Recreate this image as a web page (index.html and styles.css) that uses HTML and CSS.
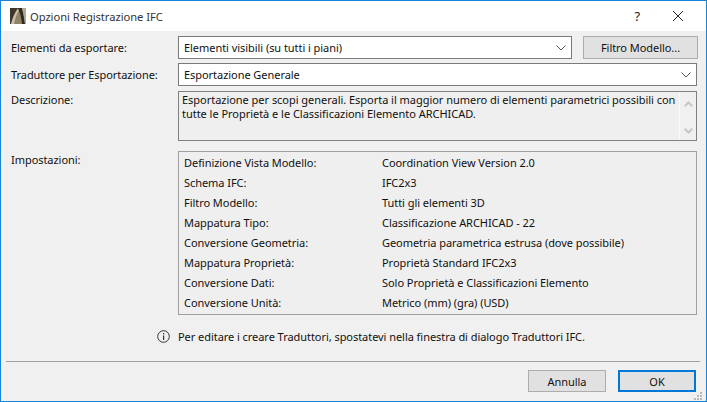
FILE: index.html
```html
<!DOCTYPE html>
<html lang="it">
<head>
  <meta charset="UTF-8">
  <meta name="viewport" content="width=device-width, initial-scale=1.0">
  <title>Opzioni Registrazione IFC</title>
  <link rel="stylesheet" href="styles.css">
</head>
<body>
  <div class="dialog">
    <div class="titlebar">
      <svg class="app-icon" width="16" height="16" viewBox="0 0 16 16">
        <rect width="16" height="16" fill="#8f8468"/>
        <path d="M0 0 H8 Q4 5 1 16 H0 Z" fill="#3f362a"/>
        <path d="M1 16 Q4 5 8 1 L10 1 Q6 6 4 16 Z" fill="#c9bfa6"/>
        <path d="M8 0 H12 Q14 8 15 16 H12 Q11 7 9 3 Z" fill="#2f2a22"/>
        <path d="M12 0 H16 V16 H15 Q14 8 12 0 Z" fill="#b3aa94"/>
      </svg>
      <span class="title">Opzioni Registrazione IFC</span>
      <span class="help">?</span>
      <svg class="close" width="12" height="12" viewBox="0 0 12 12">
        <path d="M1 1 L11 11 M11 1 L1 11" stroke="#222" stroke-width="1" fill="none"/>
      </svg>
    </div>

    <div class="content">
      <div class="row row-one">
        <label>Elementi da esportare:</label>
        <div class="select">
          <span>Elementi visibili (su tutti i piani)</span>
          <svg class="chevron" width="10" height="6" viewBox="0 0 10 6"><path d="M0.5 0.5 L5 5 L9.5 0.5" fill="none" stroke="#555"/></svg>
        </div>
        <button class="btn-filter">Filtro Modello...</button>
      </div>

      <div class="row row-two">
        <label>Traduttore per Esportazione:</label>
        <div class="select">
          <span>Esportazione Generale</span>
          <svg class="chevron" width="10" height="6" viewBox="0 0 10 6"><path d="M0.5 0.5 L5 5 L9.5 0.5" fill="none" stroke="#555"/></svg>
        </div>
      </div>

      <div class="row row-desc">
        <label>Descrizione:</label>
        <div class="desc">
          <p>Esportazione per scopi generali. Esporta il maggior numero di elementi parametrici possibili con tutte le Proprietà e le Classificazioni Elemento ARCHICAD.</p>
          <div class="scrollbar">
            <svg width="9" height="6" viewBox="0 0 9 6"><path d="M0.7 5.3 L4.5 1.5 L8.3 5.3" fill="none" stroke="#c6c6c6" stroke-width="2"/></svg>
            <svg width="9" height="6" viewBox="0 0 9 6"><path d="M0.7 0.7 L4.5 4.5 L8.3 0.7" fill="none" stroke="#c6c6c6" stroke-width="2"/></svg>
          </div>
        </div>
      </div>

      <div class="row row-settings">
        <label>Impostazioni:</label>
        <div class="settings">
          <span>Definizione Vista Modello:</span><span>Coordination View Version 2.0</span>
          <span>Schema IFC:</span><span>IFC2x3</span>
          <span>Filtro Modello:</span><span>Tutti gli elementi 3D</span>
          <span>Mappatura Tipo:</span><span>Classificazione ARCHICAD - 22</span>
          <span>Conversione Geometria:</span><span>Geometria parametrica estrusa (dove possibile)</span>
          <span>Mappatura Proprietà:</span><span>Proprietà Standard IFC2x3</span>
          <span>Conversione Dati:</span><span>Solo Proprietà e Classificazioni Elemento</span>
          <span>Conversione Unità:</span><span>Metrico (mm) (gra) (USD)</span>
        </div>
      </div>

      <div class="info">
        <svg width="13" height="13" viewBox="0 0 13 13">
          <circle cx="6.5" cy="6.5" r="5.8" fill="none" stroke="#333"/>
          <rect x="6" y="5.5" width="1.2" height="4.5" fill="#333"/>
          <rect x="6" y="3" width="1.2" height="1.4" fill="#333"/>
        </svg>
        <span>Per editare i creare Traduttori, spostatevi nella finestra di dialogo Traduttori IFC.</span>
      </div>
    </div>

    <div class="footer">
      <button class="btn-cancel">Annulla</button>
      <button class="btn-ok">OK</button>
    </div>
    <svg class="grip" width="9" height="9" viewBox="0 0 9 9">
      <rect x="6" y="0" width="2" height="2"/>
      <rect x="3" y="3" width="2" height="2"/>
      <rect x="6" y="3" width="2" height="2"/>
      <rect x="0" y="6" width="2" height="2"/>
      <rect x="3" y="6" width="2" height="2"/>
      <rect x="6" y="6" width="2" height="2"/>
    </svg>
  </div>
</body>
</html>
```

FILE: styles.css
```css
* {
  box-sizing: border-box;
}
html, body {
  margin: 0;
  height: 100%;
}
body {
  font-family: 'Noto Sans', 'Open Sans', Arial, sans-serif;
  font-size: 11px;
  letter-spacing: -0.05px;
  color: #111;
  background: #f0f0f0;
}
.dialog {
  position: relative;
  width: 707px;
  height: 402px;
  border: 1px solid #1883d7;
  background: #f0f0f0;
  overflow: hidden;
}
.titlebar {
  display: flex;
  align-items: center;
  height: 30px;
  padding: 0 22px 0 9px;
  background: #fff;
}
.title {
  margin-left: 4px;
  font-size: 11.2px;
  color: #333;
}
.help {
  margin-left: auto;
  margin-right: 32px;
  font-size: 13px;
  color: #222;
}
.content {
  padding: 5px 9px 0 10px;
}
.row {
  display: grid;
  grid-template-columns: 167px 1fr;
}
.row label {
  line-height: 18px;
}
.row-one {
  grid-template-columns: 167px 394px 114px;
  column-gap: 0;
  height: 23px;
}
.row-one .btn-filter {
  margin-left: 11px;
  width: 115px;
}
.row-two {
  height: 23px;
  margin-top: 4px;
}
.row-one label, .row-two label {
  align-self: center;
}
.row-desc {
  height: 50px;
  margin-top: 5px;
}
.row-settings {
  height: 164px;
  margin-top: 10px;
}
.select {
  display: flex;
  align-items: center;
  justify-content: space-between;
  padding: 0 5px 0 5px;
  background: #fff;
  border: 1px solid #7a7a7a;
}
button {
  font: inherit;
  letter-spacing: inherit;
  color: #111;
  padding: 0;
  background: #e1e1e1;
  border: 1px solid #adadad;
}
.desc {
  display: flex;
  justify-content: space-between;
  background: #efefef;
  border: 1px solid #808080;
}
.desc p {
  margin: 0;
  padding: 1px 0 0 3px;
  width: 500px;
  line-height: 14px;
  letter-spacing: -0.03px;
}
.scrollbar {
  display: flex;
  flex-direction: column;
  justify-content: space-between;
  align-items: center;
  width: 17px;
  padding: 9px 0 6px;
  background: #f0f0f0;
  border-left: 1px solid #fafafa;
}
.settings {
  display: grid;
  grid-template-columns: 198px 1fr;
  grid-auto-rows: 20px;
  align-items: center;
  padding: 0 0 0 5px;
  background: #efefef;
  border: 1px solid #a0a0a0;
}
.info {
  display: flex;
  align-items: center;
  justify-content: flex-start;
  gap: 8px;
  height: 20px;
  margin: 11px 0 0 146px;
}
.footer {
  display: flex;
  justify-content: flex-end;
  gap: 12px;
  margin: 15px 6px 0 5px;
  padding: 8px 4px 0 0;
  border-top: 1px solid #a0a0a0;
}
.footer button {
  width: 78px;
  height: 22px;
}
.footer .btn-ok {
  border: 2px solid #0078d7;
}
.grip {
  position: absolute;
  right: 3px;
  bottom: 0;
  fill: #b8b8b8;
}
```
